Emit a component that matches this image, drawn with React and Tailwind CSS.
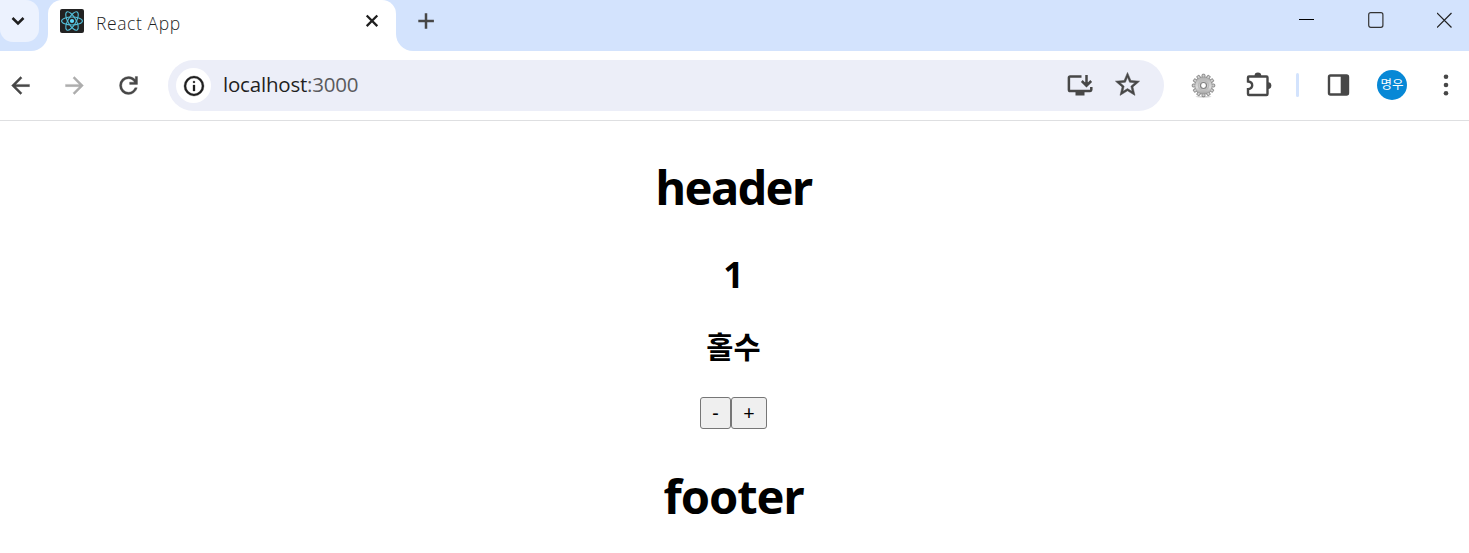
import React, { useState } from "react";

const teeth = Array.from({ length: 12 }, (_, i) => i * 30);

function ReactLogo() {
  return (
    <svg className="size-6 shrink-0" viewBox="0 0 24 24" fill="none">
      <rect width="24" height="24" rx="2" fill="#222" />
      <g stroke="#53bfd9" strokeWidth="1.1">
        <ellipse cx="12" cy="12" rx="10.4" ry="4" />
        <ellipse cx="12" cy="12" rx="10.4" ry="4" transform="rotate(60 12 12)" />
        <ellipse cx="12" cy="12" rx="10.4" ry="4" transform="rotate(120 12 12)" />
      </g>
      <circle cx="12" cy="12" r="2.1" fill="#61dafb" />
    </svg>
  );
}

function TabStrip() {
  return (
    <div className="flex h-[51px] bg-white">
      <div className="h-[51px] w-12 rounded-br-[17px] bg-[#d3e3fd]">
        <div className="flex h-[42px] w-[39px] items-center justify-center rounded-r-[13px] rounded-bl-[13px] bg-[#ecf2fe]">
          <svg className="mr-[3px] h-4 w-4" viewBox="0 0 16 16" fill="none" stroke="#1f1f1f" strokeWidth="2.500">
            <path d="M2.500 5 8 10.500 13.500 5" />
          </svg>
        </div>
      </div>
      <div className="h-[51px] w-[348px] bg-linear-to-b from-[#d3e3fd] from-50% to-white to-50%">
        <div className="flex h-full rounded-t-[14px] bg-white pt-[9px] pl-3">
          <ReactLogo />
          <span className="ml-3 h-7 w-[260px] text-[17.500px] leading-[29px] font-light tracking-[0.600px] whitespace-nowrap text-[#1f1f1f]">React App</span>
          <svg className="mt-[3px] ml-[7px] size-[18px] shrink-0" viewBox="0 0 18 18" stroke="#1f1f1f" strokeWidth="2.3">
            <path d="m3.700 3.500 10.600 10.600M14.300 3.500 3.700 14.100" />
          </svg>
        </div>
      </div>
      <div className="flex h-[51px] flex-1 justify-between rounded-bl-[17px] bg-[#d3e3fd]">
        <svg className="mt-3 ml-[21px] size-[18px]" viewBox="0 0 18 18" stroke="#474747" strokeWidth="2.500">
          <path d="M1.300 9h15.600M9 1.200v15.600" />
        </svg>
        <div className="mt-3 mr-4 flex gap-[53px]">
          <svg className="size-4" viewBox="0 0 16 16" stroke="#000" strokeWidth="1">
            <path d="M0 7.500h15" />
          </svg>
          <svg className="size-4" viewBox="0 0 16 16" fill="none" stroke="#333" strokeWidth="1.2">
            <rect x="0.700" y="0.700" width="14.200" height="14.600" rx="2" />
          </svg>
          <svg className="size-4" viewBox="0 0 16 16" stroke="#222" strokeWidth="1.200">
            <path d="m0 1 14.500 14.500M14.500 1 0 15.500" />
          </svg>
        </div>
      </div>
    </div>
  );
}

function Gear() {
  return (
    <svg className="ml-[27px] size-[25px] shrink-0" viewBox="0 0 25 25">
      <defs>
        <linearGradient id="metal" x1="0" y1="0" x2="0" y2="1">
          <stop offset="0" stopColor="#b0b0b0" />
          <stop offset="0.6" stopColor="#dcdcdc" />
          <stop offset="1" stopColor="#a0a0a0" />
        </linearGradient>
      </defs>
      <ellipse cx="12.500" cy="23.800" rx="8" ry="0.700" fill="#ccc" />
      <g stroke="#666" strokeWidth="0.700">
        {teeth.map((a) => (
          <rect key={a} x="11" y="1.200" width="3" height="5" rx="1" fill="#cfcfcf" transform={`rotate(${a} 12.500 12.500)`} />
        ))}
      </g>
      <circle cx="12.500" cy="12.500" r="8.600" fill="url(#metal)" stroke="#8b8b8b" strokeWidth="0.500" />
      <circle cx="12.500" cy="12.500" r="5" fill="none" stroke="#bbb" strokeWidth="1.500" />
      <circle cx="12.500" cy="12.500" r="3" fill="#fff" stroke="#808080" strokeWidth="1.200" />
    </svg>
  );
}

function Toolbar() {
  return (
    <div className="flex h-[70px] items-center border-b border-[#dedfe1] bg-white pl-[7px]">
      <svg className="mb-px size-[27px] shrink-0" viewBox="0 0 24 24" fill="#474747" stroke="#474747" strokeWidth="0.300">
        <path d="M20 11H7.830l5.590-5.590L12 4l-8 8 8 8 1.410-1.410L7.830 13H20v-2z" />
      </svg>
      <svg className="mb-px ml-[27px] size-[27px] shrink-0" viewBox="0 0 24 24" fill="#adadad" stroke="#adadad" strokeWidth="0.300">
        <path d="m12 4-1.410 1.410L16.170 11H4v2h12.170l-5.580 5.590L12 20l8-8z" />
      </svg>
      <svg className="mb-px ml-[27px] size-[27px] shrink-0" viewBox="0 0 24 24" fill="#474747" stroke="#474747" strokeWidth="0.300">
        <path d="M12 20q-3.350 0-5.675-2.325T4 12t2.325-5.675T12 4q1.725 0 3.300.7125T18 6.750V4h2v7h-7V9h4.200q-.8-1.400-2.1875-2.200T12 6Q9.500 6 7.750 7.750T6 12t1.750 4.250T12 18q1.925 0 3.475-1.100T17.650 14h2.100q-.7 2.650-2.850 4.325T12 20" />
      </svg>
      <div className="ml-[26px] flex h-[51px] w-[996px] shrink-0 items-center rounded-full bg-[#eceef8] pl-2">
        <div className="flex size-[35px] items-center justify-center rounded-full bg-white">
          <svg className="size-6" viewBox="0 0 24 24" fill="#1f1f1f" stroke="#1f1f1f" strokeWidth="0.300">
            <path d="M11 17h2v-6h-2zm1-8q.425 0 .7125-.2875T13 8t-.2875-.7125T12 7t-.7125.2875T11 8t.2875.7125T12 9m0 13a10 10 0 1 1 0-20 10 10 0 0 1 0 20m0-2.100a7.900 7.900 0 1 0 0-15.800 7.900 7.900 0 0 0 0 15.800" />
          </svg>
        </div>
        <span className="mb-[3px] ml-[12px] text-[20.500px] leading-7 tracking-[-0.200px] whitespace-nowrap text-[#1f1f1f]">
          localhost<span className="text-[#5a5a5d]">:3000</span>
        </span>
        <svg className="ml-auto h-6 w-[27px]" viewBox="0 0 27 24" fill="none" stroke="#474747" strokeWidth="2.500">
          <path d="M15.500 2.500H4.200Q2.900 2.500 2.900 3.800v11.900Q2.900 17 4.200 17h20Q25.300 17 25.300 15.800V13M20.500 1v10M15.800 7l4.700 4.700L25.200 7" />
          <path d="M9.500 17h9v4.500h-9z" fill="#474747" stroke="none" />
        </svg>
        <svg className="mr-[22px] mb-[2px] ml-[20px] size-[29px]" viewBox="0 0 24 24" fill="#474747" stroke="#474747" strokeWidth="0.400">
          <path d="m22 9.240-7.190-.62L12 2 9.190 8.630 2 9.240l5.460 4.730L5.820 21 12 17.270 18.180 21l-1.630-7.030zM12 15.400l-3.760 2.270 1-4.280-3.320-2.880 4.380-.38L12 6.100l1.710 4.040 4.380.38-3.320 2.880 1 4.280z" />
        </svg>
      </div>
      <Gear />
      <svg className="mb-[3px] ml-[29px] size-7 shrink-0" viewBox="0 0 28 28">
        <path d="M4 6.500h17.500q1 0 1 1V24q0 1-1 1H4q-1 0-1-1v-4.800c5.600-.5 5.600-7.200 0-7.700V7.500q0-1 1-1z" fill="none" stroke="#474747" strokeWidth="2.400" />
        <path d="M9.500 6a3.400 3.400 0 0 1 6.800 0zM23 12.200a3.400 3.400 0 0 1 0 6.800z" fill="#474747" />
      </svg>
      <div className="mb-px ml-[23px] h-6 w-[3px] shrink-0 rounded-sm bg-[#d3e3fd]" />
      <svg className="mb-px ml-[27px] size-6 shrink-0" viewBox="0 0 24 24">
        <rect x="3" y="2.500" width="19" height="19" rx="1.500" fill="none" stroke="#474747" strokeWidth="2.400" />
        <path d="M14.700 2h6q2 0 2 2v16q0 2-2 2h-6z" fill="#474747" />
      </svg>
      <div className="mb-px ml-[27px] flex size-[30px] shrink-0 items-center justify-center rounded-full bg-[#0788d6] text-[12.500px] leading-none text-white">명우</div>
      <svg className="mb-px ml-[33px] h-6 w-3 shrink-0" viewBox="0 0 12 24" fill="#474747">
        <circle cx="6" cy="3.700" r="2.300" />
        <circle cx="6" cy="12" r="2.300" />
        <circle cx="6" cy="20.300" r="2.300" />
      </svg>
    </div>
  );
}

export default function App() {
  const [count, setCount] = useState(1);
  return (
    <div className="h-[553px] overflow-hidden bg-white font-['Open_Sans','Noto_Sans_CJK_KR',sans-serif]">
      <TabStrip />
      <Toolbar />
      <main className="flex flex-col items-center pr-[2px] font-['Noto_Sans','Noto_Sans_CJK_KR',sans-serif] text-black">
        <h1 className="mt-[34px] text-[47px] leading-[64px] font-bold tracking-[-1.600px]">header</h1>
        <h2 className="mt-8 text-[36px] leading-[48px] font-bold">{count}</h2>
        <h3 className="mt-7 text-[29.500px] leading-[40px] font-bold">{count % 2 ? "홀수" : "짝수"}</h3>
        <div className="mt-[30px] flex text-[20px] leading-none">
          <button className="h-8 w-[31px] rounded-[3px] border border-[#767676] bg-[#efefef] pb-px" onClick={() => setCount(count - 1)}>-</button>
          <button className="h-8 w-9 rounded-[3px] border border-[#767676] bg-[#efefef] pb-px" onClick={() => setCount(count + 1)}>+</button>
        </div>
        <h1 className="mt-[35px] text-[47px] leading-[64px] font-bold tracking-[-1.100px]">footer</h1>
      </main>
    </div>
  );
}
